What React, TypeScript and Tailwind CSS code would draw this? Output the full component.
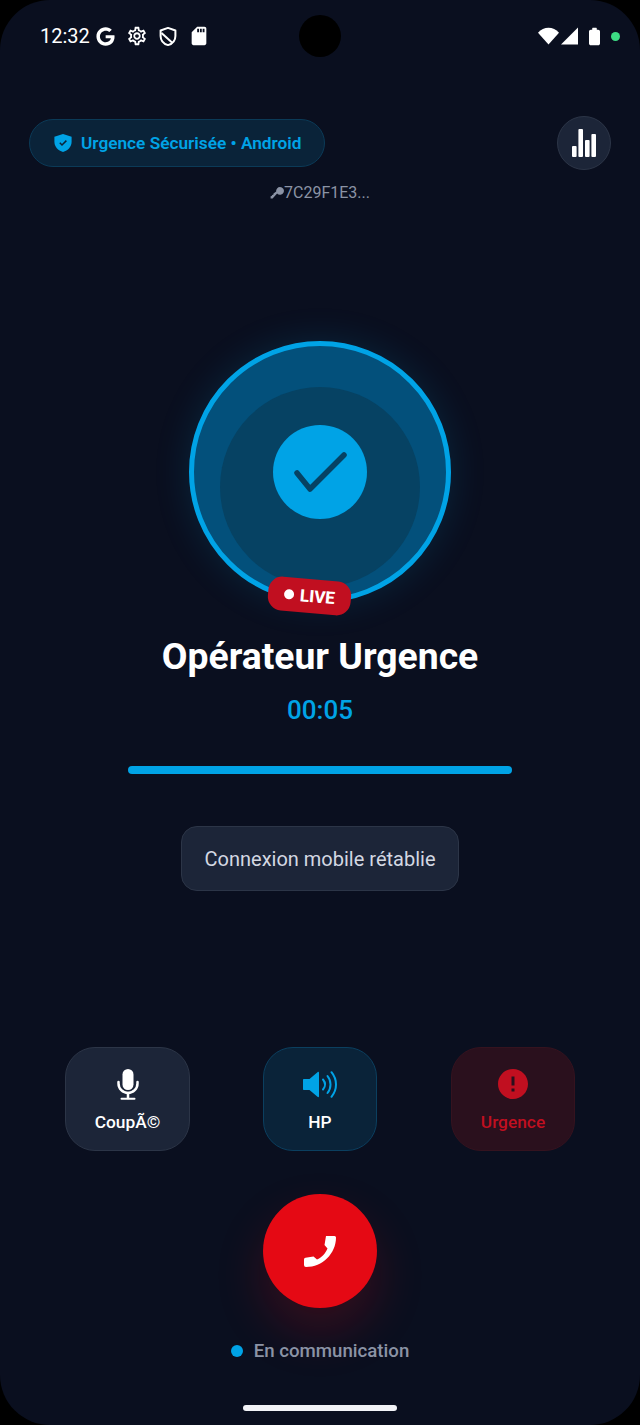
import { MdError, MdOutlineSettings, MdSdCard } from 'react-icons/md';
import { FaGoogle } from 'react-icons/fa';

function ShieldOutline() {
    return (
        <svg viewBox="0 0 18 20" className="h-[21px] w-[18px]" fill="none" stroke="white" strokeWidth="2" strokeLinejoin="round">
            <path d="M9 1.400 16.400 4v5.400c0 4.400-3 7.800-7.400 9.200-4.400-1.400-7.400-4.800-7.400-9.200V4z" />
            <path d="M2.500 6.500 13 16" />
        </svg>
    );
}

function ShieldCheck() {
    return (
        <svg viewBox="0 0 18 18" className="h-[18px] w-[18px]" fill="none">
            <path d="M9 0 17.600 2.800v5C17.600 12.800 14 16.500 9 18 4 16.500.4 12.800.4 7.800v-5z" fill="#00a3e6" />
            <path d="M5.800 8.800 8 11l4.400-4.400" stroke="#0a2339" strokeWidth="1.500" />
        </svg>
    );
}

function KeyIcon() {
    return (
        <svg viewBox="0 0 14 12" className="h-[12px] w-[14px]" fill="#8b93a5">
            <path d="M10 0a3.900 3.900 0 1 1-2.900 6.500L2.600 11.500H.6V9.300l1.200-.2.200-1.200 1.300-.2.200-1.100 2.700-2.100A3.900 3.900 0 0 1 10 0z" />
        </svg>
    );
}

function MicIcon() {
    return (
        <svg viewBox="0 0 22 31" className="h-[31px] w-[22px]" fill="none" stroke="white" strokeWidth="2.500" strokeLinecap="round">
            <rect x="5.500" y="0" width="11" height="21" rx="5.500" fill="white" stroke="none" />
            <path d="M1.500 13v1.500a9.500 9.500 0 0 0 19 0V13" />
            <path d="M11 24v5" />
            <path d="M4.500 29.700h13" strokeWidth="2" />
        </svg>
    );
}

function SpeakerIcon() {
    return (
        <svg viewBox="0 0 34 27" className="h-[27px] w-[34px]" fill="none">
            <path d="M1 8h5.500L14.500 1.200C15.400.500 16 .900 16 1.800v23.400c0 .900-.600 1.300-1.500.600L6.500 19H1c-.600 0-1-.400-1-1V9c0-.600.400-1 1-1z" fill="#00a3e6" />
            <path d="M20 8.500c2.500 3 2.500 7 0 10" stroke="#00a3e6" strokeWidth="2" strokeLinecap="round" />
            <path d="M24.500 5c4 5 4 12 0 17" stroke="#00a3e6" strokeWidth="2" strokeLinecap="round" />
            <path d="M28.500 1.200c6 7.400 6 17.200 0 24.600" stroke="#00a3e6" strokeWidth="2" strokeLinecap="round" />
        </svg>
    );
}

function PhoneIcon() {
    return (
        <svg viewBox="0 0 32 32" className="h-[32px] w-[32px]" fill="white">
            <path d="M22 1h8.500Q32 1 32 2.500C32 18.500 18.500 32 2 32q-2 0-2-2v-5.500q0-1.500 1.500-1.700l8-1.300 3.500 3c4.500-2 8.500-6 10.500-11l-3-3.500z" />
        </svg>
    );
}

function StatusBar() {
    return (
        <div className="flex h-[72px] items-center pl-[40px] pr-[20px] text-white">
            <span className="w-[51px] text-[20px] leading-none">12:32</span>
            <FaGoogle className="ml-[5px] text-[19px]" />
            <MdOutlineSettings className="ml-[11px] text-[22px]" />
            <span className="ml-[11px] flex"><ShieldOutline /></span>
            <MdSdCard className="ml-[11px] text-[22px]" />
            <div className="ml-auto flex items-center">
                <svg viewBox="0 0 22 18" className="h-[18px] w-[21px]" fill="white">
                    <path d="M0 5.500C6-1.300 16-1.300 22 5.500L11 18z" />
                </svg>
                <svg viewBox="0 0 18 18" className="ml-[2px] h-[18px] w-[17px]" fill="white">
                    <path d="M18 0v18H0z" />
                </svg>
                <svg viewBox="0 0 12 19" className="ml-[11px] h-[19px] w-[11px]" fill="white">
                    <path d="M3.500 2V1c0-.500.300-1 1-1h3c.700 0 1 .500 1 1v1H10c1 0 2 .800 2 2v13c0 1.200-1 2-2 2H2c-1 0-2-.800-2-2V4c0-1.200 1-2 2-2z" />
                </svg>
                <span className="ml-[11px] h-[9px] w-[9px] rounded-full bg-[#3ddc84]" />
            </div>
        </div>
    );
}

function ControlButton({ icon, label, className, labelClass }: { icon: React.ReactNode; label: string; className: string; labelClass: string }) {
    return (
        <button className={`flex h-[104px] flex-col items-center rounded-[30px] border pt-[20px] ${className}`}>
            <span className="flex h-[32px] items-center justify-center">{icon}</span>
            <span className={`mt-[12px] text-[17.33px] font-[480] leading-[20px] ${labelClass}`}>{label}</span>
        </button>
    );
}

export default function App() {
    return (
        <div className="h-[1425px] w-[640px] overflow-hidden bg-black font-['Roboto',sans-serif]">
            <div className="relative flex h-full flex-col rounded-[50px] bg-[#0a0f1f]">
                {/* camera hole */}
                <div className="absolute left-[299px] top-[15px] h-[42px] w-[42px] rounded-full bg-black" />

                <StatusBar />

                {/* header */}
                <div className="mt-[44px] flex items-center justify-between pl-[29px] pr-[29px]">
                    <div className="flex h-[48px] w-[296px] items-center rounded-full border border-[#0b3a57] bg-[#0a2339] pl-[24px]">
                        <ShieldCheck />
                        <span className="ml-[9px] pt-[2px] text-[17.25px] font-semibold text-[#00a3e6]">Urgence Sécurisée • Android</span>
                    </div>
                    <button className="flex h-[54px] w-[54px] items-center justify-center rounded-full border border-[#2c3547] bg-[#1c2538]">
                        <svg viewBox="0 0 24 28" className="h-[28px] w-[24px]" fill="white">
                            <rect x="0" y="17" width="4.600" height="11" rx="1" />
                            <rect x="6.400" y="0" width="4.600" height="28" rx="1" />
                            <rect x="13" y="11" width="4.600" height="17" rx="1" />
                            <rect x="19.400" y="5" width="4.600" height="23" rx="1" />
                        </svg>
                    </button>
                </div>

                <div className="mt-[14px] flex items-center justify-center text-[16px] leading-[18px] text-[#8b93a5]">
                    <KeyIcon />
                    <span>7C29F1E3...</span>
                </div>

                {/* call ring */}
                <div className="relative mx-auto mt-[139px] h-[262px] w-[262px] shrink-0">
                    <div className="flex h-full w-full items-center justify-center overflow-hidden rounded-full border-[5px] border-[#00a3e6] bg-[#03507b] shadow-[0_0_36px_rgba(0,163,230,0.15)]">
                        <div className="relative flex h-[94px] w-[94px] items-center justify-center rounded-full bg-[#00a3e6]">
                            <div className="absolute left-[-53px] top-[-38px] h-[200px] w-[200px] rounded-full bg-[#064263]" />
                            <div className="absolute inset-0 rounded-full bg-[#00a3e6]">
                                <svg viewBox="0 0 94 94" className="h-[94px] w-[94px]" fill="none" stroke="#064263" strokeWidth="5.500" strokeLinecap="round" strokeLinejoin="round">
                                    <path d="M24 48 37 64 71 30" />
                                </svg>
                            </div>
                        </div>
                    </div>
                    <div className="absolute left-[79px] top-[238px] flex h-[34px] w-[83px] rotate-[5deg] items-center justify-center rounded-[14px] bg-[#c10f20] text-white">
                        <span className="h-[10px] w-[10px] rounded-full bg-white" />
                        <span className="ml-[6px] text-[17px] font-extrabold leading-none">LIVE</span>
                    </div>
                </div>

                <h1 className="mt-[28px] text-center text-[37.33px] font-bold leading-[50px] text-white">Opérateur Urgence</h1>
                <div className="mt-[14px] text-center text-[26px] font-medium leading-[30px] text-[#00a3e6]">00:05</div>
                <div className="mx-auto mt-[41px] h-[8px] w-[384px] rounded-full bg-[#00a3e6]" />

                <div className="mx-auto mt-[52px] flex h-[65px] w-[278px] items-center justify-center rounded-[16px] border border-[#2c3547] bg-[#1c2538] text-[20px] text-[#d3d8e2]">
                    Connexion mobile rétablie
                </div>

                {/* controls */}
                <div className="mt-[156px] flex pl-[65px]">
                    <ControlButton
                        icon={<MicIcon />}
                        label="CoupÃ©"
                        className="w-[125px] border-[#2c3547] bg-[#1c2538]"
                        labelClass="text-white"
                    />
                    <ControlButton
                        icon={<SpeakerIcon />}
                        label="HP"
                        className="ml-[73px] w-[114px] border-[#0b3f5f] bg-[#0a2339]"
                        labelClass="text-white"
                    />
                    <ControlButton
                        icon={<MdError className="text-[36px] text-[#c10f20]" />}
                        label="Urgence"
                        className="ml-[74px] w-[124px] border-[#35131f] bg-[#2a101d]"
                        labelClass="text-[#c10f20]"
                    />
                </div>

                <button className="mx-auto mt-[43px] flex h-[114px] w-[114px] shrink-0 items-center justify-center rounded-full bg-[#e50914] shadow-[0_24px_50px_rgba(229,9,20,0.2)]">
                    <PhoneIcon />
                </button>

                <div className="mt-[31px] flex items-center justify-center text-[18.67px] font-[480] leading-[24px] text-[#8b93a5]">
                    <span className="h-[12px] w-[12px] rounded-full bg-[#00a3e6]" />
                    <span className="ml-[11px]">En communication</span>
                </div>

                <div className="mx-auto mt-[42px] h-[6px] w-[154px] rounded-full bg-[#f2f3f7]" />
            </div>
        </div>
    );
}
